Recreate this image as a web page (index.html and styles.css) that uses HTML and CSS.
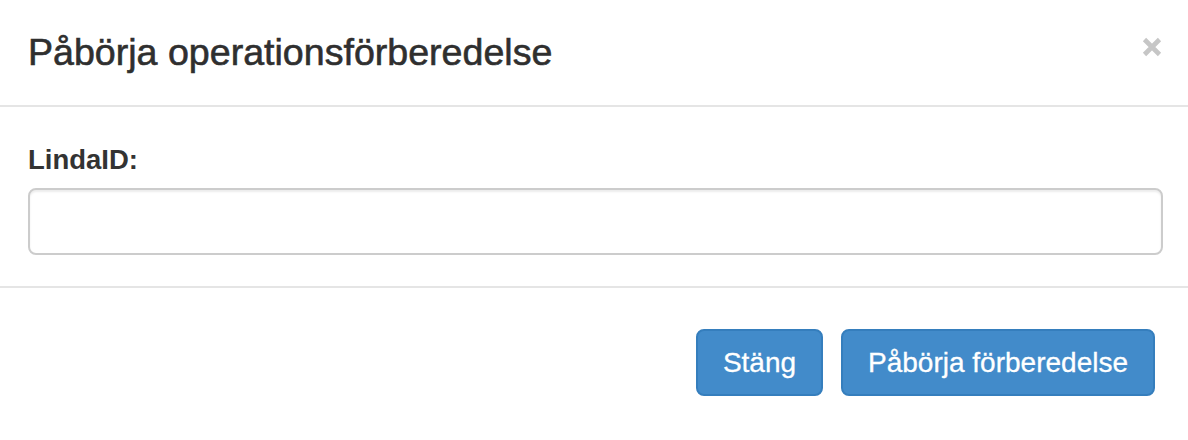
FILE: index.html
```html
<!DOCTYPE html>
<html lang="sv">
<head>
<meta charset="utf-8">
<title>Påbörja operationsförberedelse</title>
<link rel="stylesheet" href="styles.css">
</head>
<body>
<div class="modal">
  <div class="modal-header">
    <h4 class="modal-title">Påbörja operationsförberedelse</h4>
    <button class="close" type="button" aria-label="Stäng">
      <svg width="20" height="20" viewBox="0 0 20 20"><path d="M2.5 2.5 L17.5 17.5 M17.5 2.5 L2.5 17.5" stroke="#c6c6c6" stroke-width="4.6" stroke-linecap="butt"/></svg>
    </button>
  </div>
  <div class="modal-body">
    <label class="label" for="lindaid">LindaID:</label>
    <input class="input" id="lindaid" type="text">
  </div>
  <div class="modal-footer">
    <button class="btn" type="button">Stäng</button>
    <button class="btn" type="button">Påbörja förberedelse</button>
  </div>
</div>
</body>
</html>
```

FILE: styles.css
```css
html, body {
  margin: 0;
  padding: 0;
  background: #fff;
}
body {
  font-family: "Liberation Sans", Arial, sans-serif;
  color: #333;
}
.modal {
  width: 1188px;
  height: 440px;
  background: #fff;
}
.modal-header {
  display: flex;
  align-items: flex-start;
  justify-content: space-between;
  padding: 29px 26px 30px 28px;
  border-bottom: 2px solid #e5e5e5;
}
.modal-title {
  margin: 0;
  font-size: 37.6px;
  line-height: 46px;
  font-weight: normal;
  color: #2f2f2f;
  -webkit-text-stroke: 0.6px #2f2f2f;
}
.close {
  margin-top: 8px;
  padding: 0;
  border: 0;
  background: transparent;
  width: 20px;
  height: 20px;
  display: block;
}
.close svg { display: block; }
.modal-body {
  display: flex;
  flex-direction: column;
  padding: 35px 25px 31px 28px;
  border-bottom: 2px solid #e5e5e5;
}
.label {
  font-size: 27.5px;
  line-height: 36px;
  font-weight: bold;
  margin-bottom: 10px;
}
.input {
  box-sizing: border-box;
  height: 67px;
  width: 100%;
  margin: 0;
  border: 2px solid #ccc;
  border-radius: 8px;
  box-shadow: inset 0 2px 2px rgba(0,0,0,0.075);
  font-size: 28px;
  padding: 0 24px;
  font-family: inherit;
}
.modal-footer {
  display: flex;
  justify-content: flex-end;
  gap: 18px;
  padding: 41px 33px 0 28px;
}
.btn {
  box-sizing: border-box;
  height: 67px;
  padding: 0 25px;
  font-family: "Liberation Sans", Arial, sans-serif;
  font-size: 28px;
  color: #fff;
  -webkit-text-stroke: 0.3px #fff;
  background: #428bca;
  border: 2px solid #357ebd;
  border-radius: 8px;
}
```
